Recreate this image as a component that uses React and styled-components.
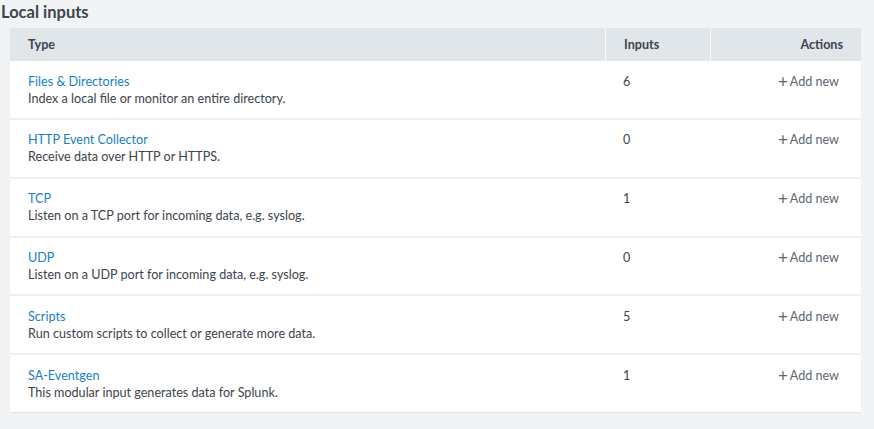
import React from 'react';
import styled, { createGlobalStyle } from 'styled-components';

const inputs = [
	{ name: 'Files & Directories', desc: 'Index a local file or monitor an entire directory.', count: 6 },
	{ name: 'HTTP Event Collector', desc: 'Receive data over HTTP or HTTPS.', count: 0 },
	{ name: 'TCP', desc: 'Listen on a TCP port for incoming data, e.g. syslog.', count: 1 },
	{ name: 'UDP', desc: 'Listen on a UDP port for incoming data, e.g. syslog.', count: 0 },
	{ name: 'Scripts', desc: 'Run custom scripts to collect or generate more data.', count: 5 },
	{ name: 'SA-Eventgen', desc: 'This modular input generates data for Splunk.', count: 1 },
];

const GlobalStyle = createGlobalStyle`
	body {
		margin: 0;
		background: #f2f3f5;
		font-family: Lato, 'Liberation Sans', sans-serif;
		color: #3c444d;
	}
`;

const App = () => {
	return (
		<Page>
			<GlobalStyle />
			<Title>Local inputs</Title>
			<Table>
				<HeadRow>
					<HeadCell>Type</HeadCell>
					<HeadCell>Inputs</HeadCell>
					<HeadCell $right>Actions</HeadCell>
				</HeadRow>
				{inputs.map((item, index) => (
					<Row key={index}>
						<TypeCell>
							<Link href="#">{item.name}</Link>
							<Desc>{item.desc}</Desc>
						</TypeCell>
						<CountCell>{item.count}</CountCell>
						<ActionCell>
							<AddButton>
								<Plus>+</Plus>Add new
							</AddButton>
						</ActionCell>
					</Row>
				))}
			</Table>
		</Page>
	);
};

const Page = styled.div`
	padding: 2px 13px 17px 0;
`;

const Title = styled.h2`
	margin: 0 0 6px 1px;
	font-size: 16.5px;
	font-weight: 700;
	line-height: 20px;
	color: #3c444d;
`;

const Table = styled.div`
	margin-left: 10px;
	background: #fff;
	box-shadow: 0 1px 1px rgba(0, 0, 0, 0.06);
`;

const HeadRow = styled.div`
	display: grid;
	grid-template-columns: 595px 105px 1fr;
	background: #e1e6eb;
	height: 33px;
`;

const HeadCell = styled.div`
	display: flex;
	align-items: center;
	justify-content: ${(p) => (p.$right ? 'flex-end' : 'flex-start')};
	padding: 0 18px;
	font-size: 12.6px;
	font-weight: 700;
	color: #3c444d;
	& + & {
		border-left: 1px solid #f7f8fa;
	}
`;

const Row = styled.div`
	display: grid;
	grid-template-columns: 595px 105px 1fr;
	padding: 11.5px 0 11.35px;
	& + & {
		border-top: 2px solid #eef0f2;
	}
`;

const TypeCell = styled.div`
	display: flex;
	flex-direction: column;
	padding: 0 18px;
`;

const Link = styled.a`
	font-size: 12.6px;
	line-height: 17px;
	color: #1a80c1;
	text-decoration: none;
`;

const Desc = styled.div`
	font-size: 12.6px;
	line-height: 17px;
	color: #3c444d;
`;

const CountCell = styled.div`
	padding: 0 18px;
	font-size: 12.6px;
	line-height: 17px;
`;

const ActionCell = styled.div`
	display: flex;
	justify-content: flex-end;
	padding: 0 22px 0 0;
`;

const AddButton = styled.span`
	display: inline-flex;
	align-items: center;
	height: 17px;
	font-size: 12.6px;
	color: #5c6773;
	cursor: pointer;
`;

const Plus = styled.span`
	font-size: 17px;
	font-weight: 400;
	margin-right: 2px;
	line-height: 17px;
`;

export default App;
